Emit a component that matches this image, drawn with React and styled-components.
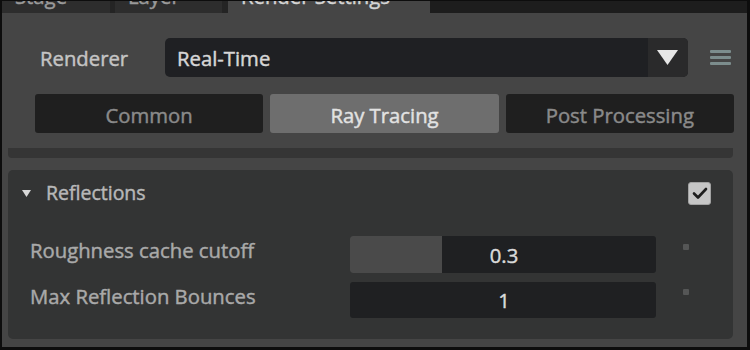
import React from 'react';
import styled, { createGlobalStyle, css } from 'styled-components';

const GlobalStyle = createGlobalStyle`
    body {
        margin: 0;
        background: #0b0b0b;
        font-family: "Open Sans", "Noto Sans", sans-serif;
    }
`;

// the UI text is a slightly heavy regular weight
const uiText = css`
    font-size: 20.3px;
    font-weight: 400;
    -webkit-text-stroke: 0.45px currentColor;
`;

const Window = styled.div`
    box-sizing: border-box;
    width: 750px;
    height: 350px;
    display: flex;
    flex-direction: column;
    background: #454545;
    border-left: 2px solid #0d0d0d;
    border-right: 3px solid #0d0d0d;
    border-bottom: 3px solid #0d0d0d;
    overflow: hidden;
`;

const TabStrip = styled.div`
    display: flex;
    height: 13px;
    flex-shrink: 0;
    background: #1d1d1d;
    border-top: 1px solid #0d0d0d;
    box-sizing: border-box;
`;

const WindowTab = styled.div`
    display: flex;
    align-items: flex-end;
    overflow: hidden;
    width: ${p => p.$width}px;
    padding-left: 13px;
    box-sizing: border-box;
    background: ${p => (p.$active ? '#454545' : '#2d2d2d')};
    color: ${p => (p.$active ? '#d4d4d4' : '#9a9a9a')};
    ${uiText};
    line-height: 22px;
    white-space: nowrap;

    span {
        margin-bottom: 6px;
    }
`;

const TabGap = styled.div`
    width: ${p => p.$width}px;
    background: #242424;
`;

const RendererRow = styled.div`
    display: flex;
    align-items: center;
    height: 39px;
    margin-top: 25px;
    padding-left: 38px;
`;

const FieldLabel = styled.div`
    width: 125px;
    color: #c4c4c4;
    ${uiText};
`;

const Dropdown = styled.div`
    display: flex;
    width: 523px;
    height: 100%;
    border-radius: 5px;
    overflow: hidden;
    background: #1f2023;
`;

const DropdownValue = styled.div`
    flex: 1;
    display: flex;
    align-items: center;
    padding-left: 12px;
    color: #d6d6d6;
    ${uiText};
`;

const DropdownArrow = styled.div`
    width: 40px;
    display: flex;
    align-items: center;
    justify-content: center;
    background: #2a2a2b;

    svg {
        margin-left: -2px;
    }
`;

const MenuButton = styled.div`
    display: flex;
    flex-direction: column;
    gap: 3px;
    width: 21px;
    margin-left: 22px;

    i {
        display: block;
        height: 3px;
        border-radius: 1px;
        background: #7c8d8d;
    }
`;

const ModeTabs = styled.div`
    display: flex;
    gap: 7px;
    height: 39px;
    margin-top: 17px;
    padding-left: 33px;
    padding-right: 13px;
`;

const ModeTab = styled.div`
    flex: 1;
    display: flex;
    align-items: center;
    justify-content: center;
    padding-top: 3px;
    border-radius: 3px;
    background: ${p => (p.$active ? '#6e6e6e' : '#1f1f1f')};
    color: ${p => (p.$active ? '#e2e2e2' : '#8a8a8a')};
    ${uiText};
`;

const CollapsedTail = styled.div`
    height: 10px;
    margin: 15px 14px 0 6px;
    border-radius: 0 0 4px 4px;
    background: #353535;
`;

const Frame = styled.div`
    height: 169px;
    margin: 12px 14px 0 6px;
    border-radius: 5px;
    background: #333434;
    display: flex;
    flex-direction: column;
`;

const FrameHeader = styled.div`
    display: flex;
    align-items: center;
    height: 23px;
    margin-top: 12px;
    padding: 0 22px 0 14px;
`;

const FrameTitle = styled.div`
    flex: 1;
    margin-left: 15px;
    margin-bottom: 2px;
    color: #b8b8b8;
    ${uiText};
    font-size: 19.5px;
`;

const CheckBox = styled.div`
    width: 23px;
    height: 23px;
    box-sizing: border-box;
    border-radius: 3px;
    border: 1px solid #a2a2a2;
    background: #c6c6c6;
    display: flex;
    align-items: center;
    justify-content: center;
`;

const PropRow = styled.div`
    display: flex;
    align-items: center;
    height: ${p => p.$height}px;
    margin-top: ${p => p.$top}px;
    padding-left: 22px;
`;

const PropLabel = styled.div`
    width: 320px;
    margin-bottom: 9px;
    color: #a9a9a9;
    ${uiText};
`;

const ValueField = styled.div`
    position: relative;
    width: 306px;
    height: 100%;
    border-radius: 3px;
    overflow: hidden;
    background: #1f2022;
    display: flex;
    align-items: center;
    justify-content: center;
    color: #dadada;
    ${uiText};
`;

const SliderFill = styled.div`
    position: absolute;
    left: 0;
    top: 0;
    bottom: 0;
    background: #4a4a4a;
`;

const FieldValue = styled.span`
    position: relative;
    margin-left: 2px;
`;

const DefaultDot = styled.div`
    width: 6px;
    height: 6px;
    margin-left: 27px;
    margin-top: -16px;
    border-radius: 1px;
    background: #555656;
`;

const modes = ['Common', 'Ray Tracing', 'Post Processing'];

const props = [
    { label: 'Roughness cache cutoff', value: '0.3', fill: 0.3, height: 37, top: 31 },
    { label: 'Max Reflection Bounces', value: '1', height: 36, top: 9 },
];

function App() {
    return (
        <Window>
            <GlobalStyle />
            <TabStrip>
                <WindowTab $width={108}><span>Stage</span></WindowTab>
                <TabGap $width={5} />
                <WindowTab $width={107}><span>Layer</span></WindowTab>
                <TabGap $width={6} />
                <WindowTab $width={202} $active><span>Render Settings</span></WindowTab>
            </TabStrip>

            <RendererRow>
                <FieldLabel>Renderer</FieldLabel>
                <Dropdown>
                    <DropdownValue>Real-Time</DropdownValue>
                    <DropdownArrow>
                        <svg width="21" height="15" viewBox="0 0 21 15">
                            <path d="M0 0 H21 L10.5 15 Z" fill="#e6e6e6" />
                        </svg>
                    </DropdownArrow>
                </Dropdown>
                <MenuButton>
                    <i />
                    <i />
                    <i />
                </MenuButton>
            </RendererRow>

            <ModeTabs>
                {modes.map(m => (
                    <ModeTab key={m} $active={m === 'Ray Tracing'}>{m}</ModeTab>
                ))}
            </ModeTabs>

            <CollapsedTail />

            <Frame>
                <FrameHeader>
                    <svg width="9" height="7" viewBox="0 0 9 7">
                        <path d="M0 0 H9 L4.5 7 Z" fill="#d8d8d8" />
                    </svg>
                    <FrameTitle>Reflections</FrameTitle>
                    <CheckBox>
                        <svg width="16" height="13" viewBox="0 0 16 13">
                            <path d="M2 6.5 L6 10.5 L14 2" fill="none" stroke="#1e1e1e" strokeWidth="2.6" strokeLinecap="round" strokeLinejoin="round" />
                        </svg>
                    </CheckBox>
                </FrameHeader>

                {props.map(p => (
                    <PropRow key={p.label} $height={p.height} $top={p.top}>
                        <PropLabel>{p.label}</PropLabel>
                        <ValueField>
                            {p.fill != null && <SliderFill style={{ width: `${p.fill * 100}%` }} />}
                            <FieldValue>{p.value}</FieldValue>
                        </ValueField>
                        <DefaultDot />
                    </PropRow>
                ))}
            </Frame>
        </Window>
    );
}

export default App;
